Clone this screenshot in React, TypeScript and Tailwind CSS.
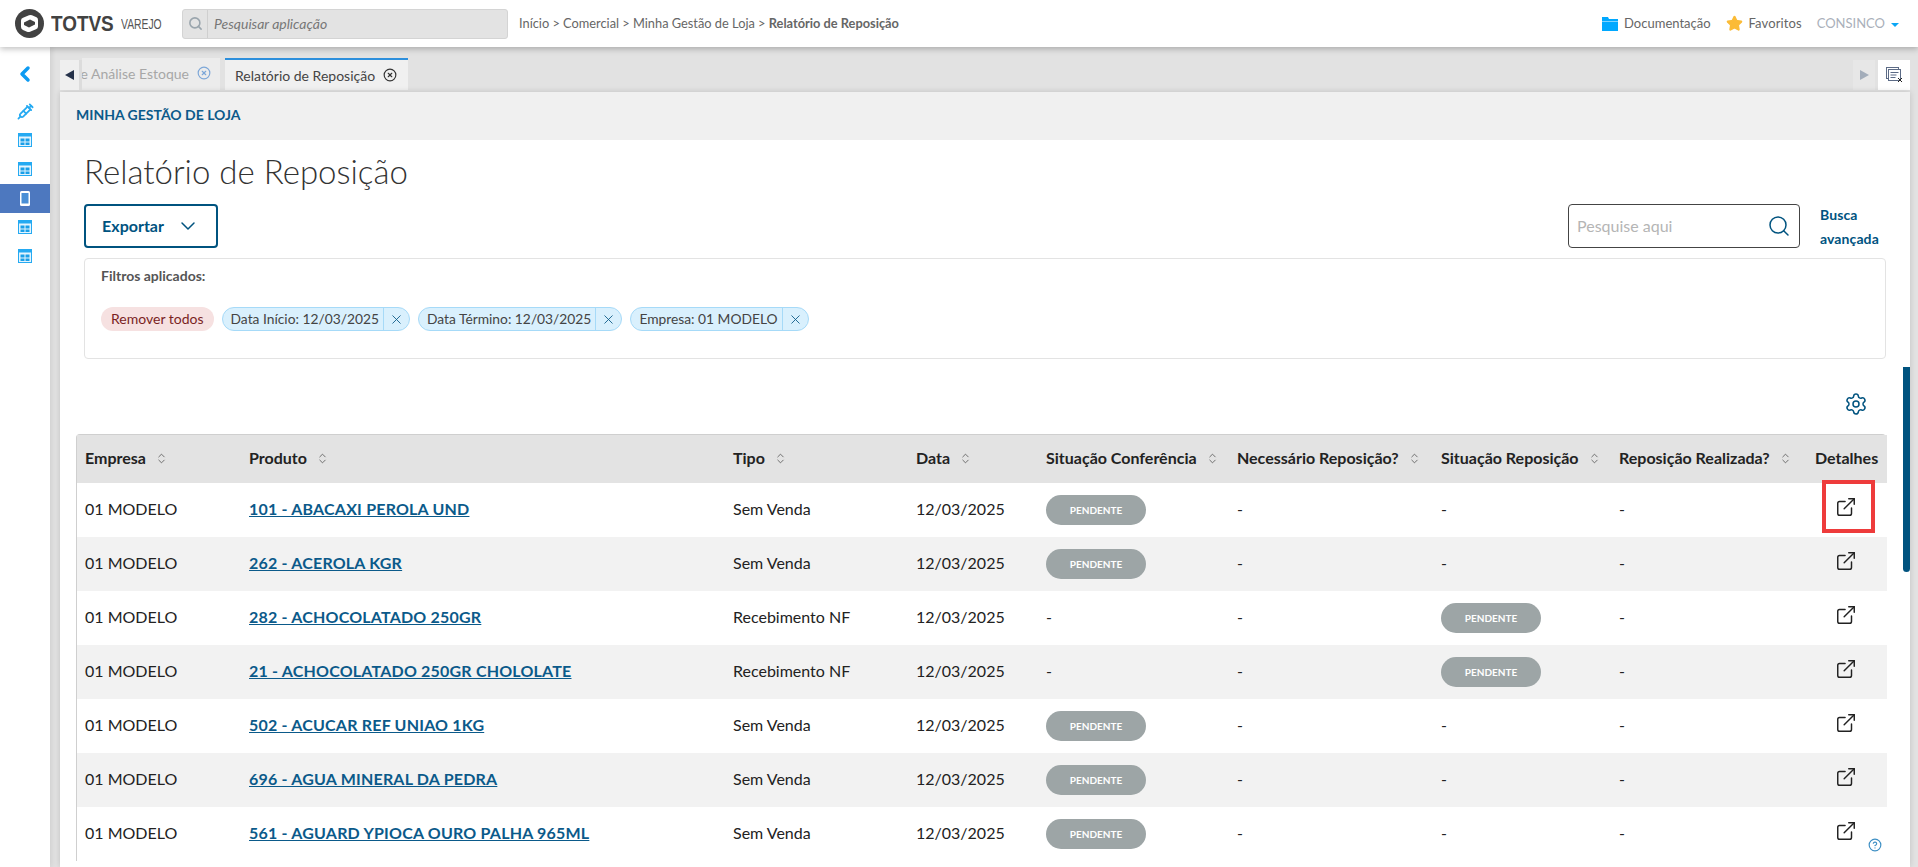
import { ChevronDown, ChevronLeft, ChevronsUpDown, CircleHelp, ExternalLink, Search, Settings, Star, X, CircleX, Syringe } from "lucide-react";

const Logo = () => (
  <div className="flex items-center ml-[15px]">
    <svg width="29" height="29" viewBox="0 0 29 29">
      <circle cx="14.5" cy="14.5" r="14.5" fill="#424242" />
      <path d="M6 11.5 Q6 9.5 8 8.7 L14 6.3 Q15.5 5.8 17 6.3 L21.5 8.2 Q23 9 23 11 L23 17.5 Q23 19.5 21 20.3 L15 22.7 Q13.5 23.2 12 22.7 L8 21 Q6 20 6 18 Z" fill="#fff" />
      <path d="M9 13.5 L15 10.5 L20 13 L20 15.5 L14 18.5 L9 16 Z" fill="#424242" />
    </svg>
    <span className="ml-[7px] w-[64px] inline-block origin-left scale-x-[0.86] text-[22px] font-bold text-[#424242] leading-none font-['Liberation_Sans',sans-serif]">TOTVS</span>
    <span className="ml-[6px] inline-block origin-left scale-x-[0.74] text-[14px] text-[#555] leading-none font-['Liberation_Sans',sans-serif]">VAREJO</span>
  </div>
);

const Folder = () => (
  <svg width="16" height="14" viewBox="0 0 16 14">
    <path d="M0 0h6l1 2h9v2H0z" fill="#00a8ff" />
    <rect x="0" y="4.5" width="16" height="9.5" fill="#00a8ff" />
  </svg>
);

const Header = () => (
  <header className="relative z-20 h-[47px] shrink-0 bg-white flex items-center shadow-[0_2px_6px_rgba(0,0,0,0.25)]">
    <div className="w-[182px] overflow-hidden"><Logo /></div>
    <div className="flex h-[30px] w-[326px] rounded-[3px] border border-[#d4d4d4] bg-[#e3e3e3]">
      <div className="w-[25px] flex items-center justify-center border-r border-[#cfcfcf]">
        <Search size={15} strokeWidth={2.5} className="text-[#9aa5ad]" />
      </div>
      <span className="pl-[6px] text-[14px] italic text-[#777] leading-[28px]">Pesquisar aplicação</span>
    </div>
    <div className="ml-[11px] text-[12.8px] text-[#666]">
      Início &gt; Comercial &gt; Minha Gestão de Loja &gt; <span className="font-bold">Relatório de Reposição</span>
    </div>
    <div className="ml-auto flex items-center pr-[19px] text-[13px]">
      <Folder />
      <span className="ml-[6px] text-[#666]">Documentação</span>
      <Star size={17} fill="#fbbb36" stroke="#fbbb36" className="ml-[15px]" />
      <span className="ml-[6px] text-[#666] tracking-[0.1px]">Favoritos</span>
      <span className="ml-[15px] text-[#aab0ba]">CONSINCO</span>
      <span className="ml-[6px] mt-[2px] border-x-[4px] border-t-[4px] border-x-transparent border-t-[#0aa6f5]" />
    </div>
  </header>
);

const CalendarIcon = () => (
  <svg width="14" height="14" viewBox="0 0 14 14">
    <rect x="0.5" y="0.5" width="13" height="13" fill="#e4f4fe" stroke="#25aaf2" />
    <rect x="0.5" y="0.5" width="13" height="3" fill="#25aaf2" />
    <rect x="2.5" y="5.5" width="4" height="3" fill="#1a9fe8" />
    <rect x="7.5" y="5.5" width="4" height="3" fill="#1a9fe8" />
    <rect x="2.5" y="9.5" width="4" height="2.5" fill="#1a9fe8" />
    <rect x="7.5" y="9.5" width="4" height="2.5" fill="#1a9fe8" />
  </svg>
);

const PhoneIcon = () => (
  <svg width="10" height="15" viewBox="0 0 10 15">
    <rect x="0" y="0" width="10" height="15" rx="1.5" fill="#fff" />
    <rect x="1.5" y="2" width="7" height="10.5" fill="#4a8fd6" />
  </svg>
);

const Sidebar = () => (
  <aside className="w-[50px] shrink-0 bg-white flex flex-col items-center shadow-[2px_0_5px_rgba(0,0,0,0.08)]">
    <ChevronLeft size={24} strokeWidth={3.5} className="mt-[15px] text-[#0d9bf2]" />
    <Syringe size={17} strokeWidth={2.5} className="mt-[17px] text-[#25aaf2]" />
    <div className="mt-[13px]"><CalendarIcon /></div>
    <div className="mt-[15px]"><CalendarIcon /></div>
    <div className="mt-[8px] w-full h-[29px] bg-[#4d78bf] flex items-center justify-center">
      <PhoneIcon />
    </div>
    <div className="mt-[7px]"><CalendarIcon /></div>
    <div className="mt-[15px]"><CalendarIcon /></div>
  </aside>
);

const Tabs = () => (
  <div className="relative h-[34px] mt-[11px] shrink-0 flex items-start">
    <div className="relative z-10 mt-[2px] w-[22px] h-[30px] bg-[#efefef] border-r-[3px] border-[#dcdcdc] flex items-center justify-center">
      <span className="border-y-[5px] border-r-[9px] border-y-transparent border-r-[#26324a]" />
    </div>
    <div className="w-[138px] h-[32px] bg-[#ececec] flex items-center justify-end pr-[9px] pb-[2px] text-[14px] text-[#a7a7a7] overflow-hidden whitespace-nowrap">
      e Análise Estoque
      <CircleX size={14} className="ml-[8px] shrink-0 text-[#7da7d8]" />
    </div>
    <div className="ml-[5px] w-[183px] h-[32px] bg-[#f0f0f0] border-t-[2px] border-[#2d8fdc] flex items-center pl-[10px] text-[14px] text-[#444] whitespace-nowrap">
      Relatório de Reposição
      <CircleX size={14} className="ml-[8px] text-[#333]" />
    </div>
    <div className="ml-auto mt-[2px] mr-[3px] w-[22px] h-[30px] bg-[#e7e7e7] flex items-center justify-center">
      <span className="border-y-[5px] border-l-[9px] border-y-transparent border-l-[#a3adba]" />
    </div>
    <div className="mt-[2px] w-[32px] h-[30px] bg-white flex items-center justify-center">
      <svg width="17" height="16" viewBox="0 0 17 16" fill="none" stroke="#5c6b86">
        <rect x="0.5" y="0.5" width="12" height="11" />
        <rect x="2.5" y="2.5" width="12" height="11" fill="#fff" />
        <path d="M4.5 5.5h8M4.5 8h6M4.5 10.5h5" />
        <path d="M12 11l4 4M16 11l-4 4" stroke="#222" />
      </svg>
    </div>
  </div>
);

const Chip = ({ label }: { label: string }) => (
  <div className="flex h-[24px] rounded-full border border-[#a6daf8] bg-[#d9f0fd] text-[13.8px] text-[#444]">
    <span className="pl-[8px] pr-[4px] leading-[22px] whitespace-nowrap">{label}</span>
    <span className="w-[26px] border-l border-[#a6daf8] flex items-center justify-center">
      <X size={15} strokeWidth={1.4} className="text-[#0b5a86]" />
    </span>
  </div>
);

const Pill = () => (
  <span className="inline-flex w-[100px] h-[30px] rounded-[15px] bg-[#9da5a6] items-center justify-center text-[10px] font-bold text-white">PENDENTE</span>
);

const columns = [
  { title: "Empresa", width: "w-[164px]" },
  { title: "Produto", width: "w-[484px]" },
  { title: "Tipo", width: "w-[183px]" },
  { title: "Data", width: "w-[130px]" },
  { title: "Situação Conferência", width: "w-[191px]" },
  { title: "Necessário Reposição?", width: "w-[204px]" },
  { title: "Situação Reposição", width: "w-[178px]" },
  { title: "Reposição Realizada?", width: "w-[196px]" },
  { title: "Detalhes", width: "w-[80px]" },
];

const rows = [
  { produto: "101 - ABACAXI PEROLA UND", tipo: "Sem Venda", conf: true },
  { produto: "262 - ACEROLA KGR", tipo: "Sem Venda", conf: true },
  { produto: "282 - ACHOCOLATADO 250GR", tipo: "Recebimento NF", conf: false },
  { produto: "21 - ACHOCOLATADO 250GR CHOLOLATE", tipo: "Recebimento NF", conf: false },
  { produto: "502 - ACUCAR REF UNIAO 1KG", tipo: "Sem Venda", conf: true },
  { produto: "696 - AGUA MINERAL DA PEDRA", tipo: "Sem Venda", conf: true },
  { produto: "561 - AGUARD YPIOCA OURO PALHA 965ML", tipo: "Sem Venda", conf: true },
];

const Table = () => (
  <div className="ml-[16px] mr-[24px] mt-[18px] border-l border-r border-t border-[#cfcfcf] rounded-t-[4px]">
    <table className="w-full table-fixed border-collapse text-[16px] text-[#222]">
      <thead>
        <tr className="h-[48px] bg-[#e3e3e3]">
          {columns.map((col, i) => (
            <th key={col.title} className={`${col.width} pl-[8px] pb-[2px] text-left font-bold whitespace-nowrap`}>
              <span className="inline-flex items-center">
                {col.title}
                {i < 8 && <ChevronsUpDown size={13} strokeWidth={1.5} className="ml-[9px] text-[#555]" />}
              </span>
            </th>
          ))}
        </tr>
      </thead>
      <tbody>
        {rows.map((row, i) => (
          <tr key={row.produto} className={`h-[54px] ${i % 2 === 0 ? "bg-white" : "bg-[#f2f2f2]"}`}>
            <td className="pl-[8px] pb-[2px]">01 MODELO</td>
            <td className="pl-[8px] pb-[2px]"><a className="font-bold underline tracking-[0.2px] text-[#0b5a8a]">{row.produto}</a></td>
            <td className="pl-[8px] pb-[2px]">{row.tipo}</td>
            <td className="pl-[8px] pb-[2px]">12/03/2025</td>
            <td className={row.conf ? "pl-[8px]" : "pl-[8px] pb-[2px]"}>{row.conf ? <Pill /> : "-"}</td>
            <td className="pl-[8px] pb-[2px]">-</td>
            <td className={row.conf ? "pl-[8px] pb-[2px]" : "pl-[8px]"}>{row.conf ? "-" : <Pill />}</td>
            <td className="pl-[8px] pb-[2px]">-</td>
            <td className="relative">
              <div className="flex justify-center pb-[6px] pr-[2px]"><ExternalLink size={22} strokeWidth={1.6} className="text-[#222]" /></div>
              {i === 0 && <div className="absolute left-[15px] top-[-3px] w-[53px] h-[53px] border-[4px] border-[#ee3b3b]" />}
            </td>
          </tr>
        ))}
      </tbody>
    </table>
  </div>
);

export default function App() {
  return (
    <div className="h-[867px] w-[1918px] overflow-hidden flex flex-col bg-[#e2e2e2] font-['Lato',sans-serif]">
      <Header />
      <div className="flex flex-1 min-h-0">
        <Sidebar />
        <main className="flex-1 min-w-0 pl-[10px] pr-[8px] flex flex-col">
          <Tabs />
          <section className="relative flex-1 min-h-0 bg-white shadow-[0_0_6px_rgba(0,0,0,0.15)] overflow-hidden">
            <div className="h-[48px] bg-[#f0f0f0] flex items-center pl-[16px] pb-[4px] text-[14px] font-bold text-[#0b5a8a]">MINHA GESTÃO DE LOJA</div>
            <h1 className="ml-[24px] mt-[10px] text-[33px] leading-[42px] font-light text-[#333]">Relatório de Reposição</h1>
            <div className="mt-[12px] ml-[24px] mr-[24px] flex items-start">
              <button className="w-[134px] h-[44px] rounded-[4px] border-2 border-[#00537f] flex items-center justify-center text-[16px] font-bold text-[#00537f]">
                Exportar
                <ChevronDown size={24} strokeWidth={1.5} className="ml-[12px]" />
              </button>
              <div className="ml-auto w-[232px] h-[44px] rounded-[4px] border border-[#444] flex items-center px-[8px] mr-[20px]">
                <span className="flex-1 text-[16px] text-[#b5b5b5]">Pesquise aqui</span>
                <Search size={24} strokeWidth={1.5} className="text-[#00537f]" />
              </div>
              <div className="w-[66px] -mt-[1px] text-[14px] font-bold leading-[24px] tracking-[0.1px] text-[#00537f]">Busca avançada</div>
            </div>
            <div className="mx-[24px] mt-[7px] h-[101px] border border-[#e3e3e3] rounded-[4px] px-[16px] pt-[7px]">
              <div className="text-[14px] font-bold leading-[20px] text-[#555]">Filtros aplicados:</div>
              <div className="mt-[21px] flex gap-[8px]">
                <div className="h-[24px] rounded-full bg-[#f6e1e1] px-[10px] text-[14px] leading-[24px] text-[#7a1f1f]">Remover todos</div>
                <Chip label="Data Início: 12/03/2025" />
                <Chip label="Data Término: 12/03/2025" />
                <Chip label="Empresa: 01 MODELO" />
              </div>
            </div>
            <div className="mt-[33px] mr-[42px] flex justify-end">
              <Settings size={24} strokeWidth={1.5} className="text-[#00537f]" />
            </div>
            <Table />
            <div className="absolute right-0 top-[275px] w-[7px] h-[205px] rounded-b-[4px] bg-[#00537f]" />
            <CircleHelp size={14} className="absolute right-[28px] top-[746px] text-[#3d8fc4]" />
          </section>
        </main>
      </div>
    </div>
  );
}
